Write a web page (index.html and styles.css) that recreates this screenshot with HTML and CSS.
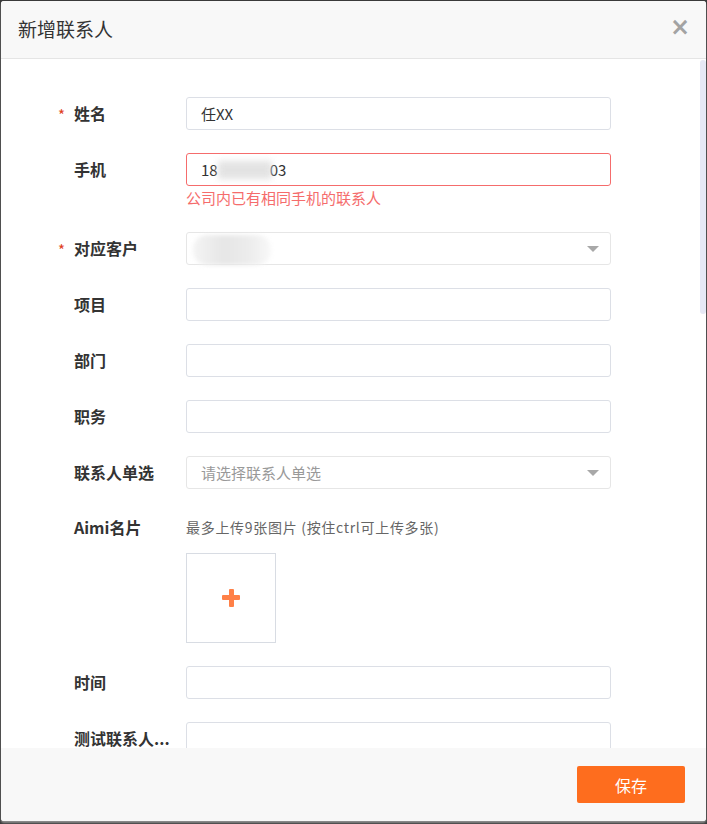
FILE: index.html
```html
<!DOCTYPE html>
<html lang="zh-CN">
<head>
    <meta charset="UTF-8">
    <title>新增联系人</title>
    <link rel="stylesheet" href="styles.css">
</head>
<body>
    <div class="modal">
        <div class="modal-header">
            <span class="modal-title">新增联系人</span>
            <span class="modal-close">&times;</span>
        </div>

        <div class="modal-body">
            <div class="form-row">
                <label class="form-label required">姓名</label>
                <div class="field">
                    <div class="input">任XX</div>
                </div>
            </div>

            <div class="form-row">
                <label class="form-label">手机</label>
                <div class="field">
                    <div class="input is-error">18<span class="mask mask-phone"></span>03</div>
                    <div class="error-tip">公司内已有相同手机的联系人</div>
                </div>
            </div>

            <div class="form-row">
                <label class="form-label required">对应客户</label>
                <div class="field">
                    <div class="input select"><span class="mask mask-customer"></span></div>
                </div>
            </div>

            <div class="form-row">
                <label class="form-label">项目</label>
                <div class="field"><div class="input"></div></div>
            </div>

            <div class="form-row">
                <label class="form-label">部门</label>
                <div class="field"><div class="input"></div></div>
            </div>

            <div class="form-row gap-fix">
                <label class="form-label">职务</label>
                <div class="field"><div class="input"></div></div>
            </div>

            <div class="form-row">
                <label class="form-label">联系人单选</label>
                <div class="field">
                    <div class="input select placeholder">请选择联系人单选</div>
                </div>
            </div>

            <div class="form-row upload-row">
                <label class="form-label">Aimi名片</label>
                <div class="field">
                    <div class="upload-tip">最多上传9张图片 (按住ctrl可上传多张)</div>
                    <div class="upload-box"><span class="plus"></span></div>
                </div>
            </div>

            <div class="form-row">
                <label class="form-label">时间</label>
                <div class="field"><div class="input"></div></div>
            </div>

            <div class="form-row">
                <label class="form-label">测试联系人...</label>
                <div class="field"><div class="input"></div></div>
            </div>
        </div>

        <!-- 滚动条 -->
        <div class="scroll-thumb"></div>

        <div class="modal-footer">
            <button class="save-button">保存</button>
        </div>
    </div>
</body>
</html>
```

FILE: styles.css
```css
* {
    box-sizing: border-box;
    margin: 0;
    padding: 0;
}

body {
    background: #3a3a3a;
    font-family: "Noto Sans CJK SC", "Noto Sans", sans-serif;
    color: #333;
    width: 707px;
    height: 824px;
    overflow: hidden;
}

.modal {
    position: relative;
    margin: 1px 1px 0 1px;
    width: 705px;
    height: 820px;
    background: #fff;
    border-radius: 3px;
    overflow: hidden;
    display: flex;
    flex-direction: column;
    box-shadow: 0 2px 2px rgba(150,150,150,0.9);
}

.modal-header {
    flex: none;
    height: 58px;
    background: #f8f8f8;
    border-bottom: 1px solid #e5e5e5;
    display: flex;
    align-items: center;
    justify-content: space-between;
    padding: 0 16px 0 17px;
}

.modal-title {
    font-size: 19px;
    color: #333;
    line-height: 1;
    padding-bottom: 3px;
}

.modal-close {
    font-size: 24px;
    font-weight: bold;
    color: #a3a3a3;
    line-height: 1;
    padding-bottom: 5px;
    font-family: "DejaVu Sans", sans-serif;
}

.modal-body {
    flex: 1;
    overflow: hidden;
    padding: 38px 0 0 55px;
}

.scroll-thumb {
    position: absolute;
    right: 0;
    top: 59px;
    width: 6px;
    height: 254px;
    background: #e6e8f5;
    border-radius: 3px;
}

.form-row {
    display: flex;
    margin-bottom: 23px;
}

.form-row.gap-fix {
    margin-top: 1px;
}

.form-label {
    width: 130px;
    flex: none;
    height: 33px;
    line-height: 33px;
    font-size: 16px;
    font-weight: bold;
    color: #333;
    padding-left: 18px;
    white-space: nowrap;
    position: relative;
}

.form-label.required::before {
    content: "*";
    position: absolute;
    left: 2px;
    top: 1px;
    color: #e0401c;
    font-weight: normal;
    font-size: 15px;
}

.field {
    width: 425px;
}

.input {
    height: 33px;
    border: 1px solid #dcdfe6;
    border-radius: 3px;
    padding: 0 14px;
    font-size: 15px;
    line-height: 31px;
    color: #333;
    white-space: nowrap;
    position: relative;
}

.input.is-error {
    border-color: #f56c6c;
}

.input.select {
    border-color: #e6e6e6;
}

.input.select::after {
    content: "";
    position: absolute;
    right: 11px;
    top: 13px;
    border-left: 6px solid transparent;
    border-right: 6px solid transparent;
    border-top: 6px solid #a8a8a8;
}

.input.placeholder {
    color: #999;
}

.mask {
    display: inline-block;
    vertical-align: middle;
    background: #dcdcdc;
    filter: blur(3px);
}

.mask-phone {
    width: 54px;
    height: 18px;
    margin: 0 -2px 3px 0;
    opacity: 0.8;
}

.mask-customer {
    position: absolute;
    left: 6px;
    top: 2px;
    width: 78px;
    height: 30px;
    border-radius: 14px;
    background: linear-gradient(90deg, #f4f4f4, #e6e6e6 40%, #ececec 70%, #f8f8f8);
    filter: blur(2px);
}

.error-tip {
    font-size: 15px;
    color: #f56c6c;
    line-height: 24px;
    margin-bottom: -1px;
}

.upload-row .form-label {
    height: 30px;
    line-height: 30px;
}

.upload-tip {
    font-size: 14px;
    letter-spacing: 0.7px;
    color: #666;
    line-height: 30px;
    margin-bottom: 11px;
}

.upload-box {
    width: 90px;
    height: 90px;
    border: 1px solid #d8dce3;
    display: flex;
    align-items: center;
    justify-content: center;
}

.plus {
    width: 18px;
    height: 18px;
    position: relative;
}

.plus::before,
.plus::after {
    content: "";
    position: absolute;
    background: #ff8047;
    border-radius: 1px;
}

.plus::before {
    left: 0;
    top: 6px;
    width: 18px;
    height: 5px;
}

.plus::after {
    left: 7px;
    top: 0;
    width: 5px;
    height: 18px;
}

.modal-footer {
    flex: none;
    height: 73px;
    background: #f8f8f8;
    display: flex;
    justify-content: flex-end;
    align-items: flex-start;
    padding: 18px 21px 0 0;
}

.save-button {
    width: 108px;
    height: 37px;
    background: #fe6d1e;
    color: #fff;
    border: none;
    border-radius: 2px;
    font-family: inherit;
    font-size: 16px;
    cursor: pointer;
}
```
